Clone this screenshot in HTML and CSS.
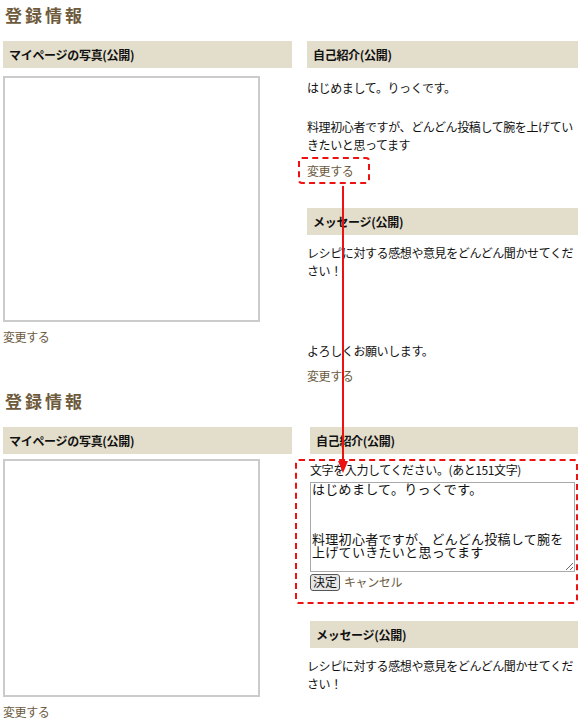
FILE: index.html
```html
<!DOCTYPE html>
<html lang="ja">
<head>
    <meta charset="UTF-8">
    <meta name="viewport" content="width=device-width, initial-scale=1.0">
    <link rel="stylesheet" href="styles.css">
</head>
<body>
    <div class="page">
        <!-- before: profile view -->
        <h1 class="title">登録情報</h1>
        <div class="section">
            <div class="col-left">
                <h2 class="bar">マイページの写真(公開)</h2>
                <div class="photo"></div>
                <a class="link" href="#">変更する</a>
            </div>
            <div class="col-right">
                <h2 class="bar">自己紹介(公開)</h2>
                <p class="intro-first">はじめまして。りっくです。</p>
                <p class="intro-second">料理初心者ですが、どんどん投稿して腕を上げていきたいと思ってます</p>
                <span class="mark"><a class="link" href="#">変更する</a></span>

                <h2 class="bar bar-msg">メッセージ(公開)</h2>
                <p class="msg-first">レシピに対する感想や意見をどんどん聞かせてください！</p>
                <p class="msg-last">よろしくお願いします。</p>
                <a class="link" href="#">変更する</a>
            </div>
        </div>

        <!-- after: editing the intro -->
        <h1 class="title title-second">登録情報</h1>
        <div class="section">
            <div class="col-left">
                <h2 class="bar">マイページの写真(公開)</h2>
                <div class="photo photo-short"></div>
                <a class="link" href="#">変更する</a>
            </div>
            <div class="col-right col-edit">
                <h2 class="bar">自己紹介(公開)</h2>
                <form class="edit-box">
                    <div class="hint">文字を入力してください。(あと151文字)</div>
                    <textarea class="edit-text">はじめまして。りっくです。



料理初心者ですが、どんどん投稿して腕を上げていきたいと思ってます</textarea>
                    <div class="edit-actions">
                        <button type="submit" class="ok-btn">決定</button>
                        <a class="link" href="#">キャンセル</a>
                    </div>
                </form>

                <h2 class="bar bar-msg2">メッセージ(公開)</h2>
                <p class="msg-first">レシピに対する感想や意見をどんどん聞かせてください！</p>
            </div>
        </div>

        <svg class="arrow" width="20" height="300" viewBox="0 0 20 300">
            <line x1="10" y1="0" x2="10" y2="278" stroke="#ee1111" stroke-width="2"/>
            <polygon points="5,275 15,275 10,287" fill="#ee1111"/>
        </svg>
    </div>
</body>
</html>
```
FILE: styles.css
```css
body {
    margin: 0;
    padding: 0;
    background-color: #ffffff;
    font-family: "Noto Sans CJK JP", "Noto Sans", sans-serif;
    font-size: 12px;
    color: #111;
}

.page {
    position: relative;
    width: 580px;
    padding: 0 2px 0 3px;
    box-sizing: border-box;
}

.title {
    margin: 2px 0 0 2px;
    font-size: 17px;
    line-height: 26px;
    font-weight: 700;
    letter-spacing: 3px;
    color: #6e5a3c;
}

.title-second {
    margin-top: 3px;
}

.section {
    display: flex;
    gap: 15px;
    margin-top: 13px;
    align-items: flex-start;
}

.col-left {
    width: 289px;
    flex-shrink: 0;
}

.col-right {
    width: 271px;
}

.bar {
    margin: 0;
    height: 27px;
    line-height: 27px;
    padding-left: 6px;
    background-color: #e3ddcb;
    font-size: 12px;
    font-weight: 700;
    letter-spacing: -0.3px;
    color: #111;
}

.photo {
    width: 253px;
    height: 242px;
    margin-top: 8px;
    border: 2px solid #cbcbcb;
}

.photo-short {
    height: 234px;
    margin-top: 5px;
}

.link {
    display: inline-block;
    line-height: 18px;
    color: #6b5a40;
    text-decoration: none;
    letter-spacing: -0.4px;
}

.col-left .link {
    margin-top: 6px;
}

p {
    margin: 0;
    line-height: 18px;
    letter-spacing: -0.4px;
}

.intro-first {
    margin-top: 11px;
}

.intro-second {
    margin-top: 21px;
}

/* red annotation around the edit link */
.mark {
    display: inline-block;
    margin: 3px 0 0 -9px;
    padding: 3px 15px 3px 7px;
    border: 2px dashed #ee1111;
    border-radius: 4px;
}

.mark .link {
    line-height: 17px;
}

.bar-msg {
    margin-top: 24px;
}

.msg-first {
    margin-top: 9px;
}

.msg-last {
    margin-top: 62px;
}

.msg-last + .link {
    margin-top: 7px;
}

.col-edit {
    width: 268px;
    margin-left: 3px;
}

.col-edit .msg-first {
    margin-left: -3px;
}

.edit-box {
    margin: 5px 0 0 -15px;
    padding: 0 0 11px 13px;
    border: 2px dashed #ee1111;
    border-radius: 4px;
}

.hint {
    line-height: 18px;
    letter-spacing: -0.4px;
}

.edit-text {
    display: block;
    width: 265px;
    height: 90px;
    margin: 3px 0 0;
    padding: 0 1px;
    box-sizing: border-box;
    border: 1px solid #a9a9a9;
    font-family: "Noto Sans CJK JP", sans-serif;
    font-size: 13px;
    line-height: 12.5px;
    letter-spacing: 0.3px;
    color: #111;
}

.edit-actions {
    display: flex;
    align-items: center;
    gap: 4px;
    margin-top: 1px;
}

.ok-btn {
    height: 17px;
    padding: 0 2px;
    border: 1px solid #555;
    border-radius: 3px;
    background-color: #e6e6e6;
    font-family: "Noto Sans CJK JP", sans-serif;
    font-size: 12px;
    line-height: 14px;
    color: #111;
}

.bar-msg2 {
    margin-top: 17px;
}

.arrow {
    position: absolute;
    left: 333px;
    top: 184px;
}
```
